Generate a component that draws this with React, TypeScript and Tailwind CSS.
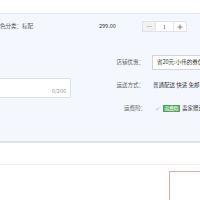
import React from "react";

export default function App() {
  const font = { fontFamily: '"Noto Sans CJK SC", "Noto Sans", sans-serif' };
  return (
    <div className="w-[200px] h-[200px] overflow-hidden bg-white" style={font}>
      <div className="h-[14px] bg-white border-b border-[#e6eaf1]" />
      <div className="h-[127px] bg-[#f4f7fd] overflow-hidden">
        {/* row 1 */}
        <div className="flex items-start h-[41px] pt-[7px] text-[5.5px] leading-[11px] text-[#333] whitespace-nowrap">
          <div className="w-[104.5px] shrink-0 -ml-[5.5px] text-[#555]">颜色分类：标配</div>
          <div className="w-[43px] shrink-0 text-[#333]">299.00</div>
          <div className="flex h-[11px] shrink-0">
            <div className="w-[14px] h-[11px] bg-[#f2f2f2] border border-[#e3e3e3] flex items-center justify-center">
              <div className="w-[5px] h-[0.6px] bg-[#c8c8c8]" />
            </div>
            <div className="w-[17px] h-[11px] bg-white border-y border-[#e3e3e3] flex items-center justify-center text-[5px] text-[#444]">1</div>
            <div className="w-[14px] h-[11px] bg-white border border-[#e3e3e3] flex items-center justify-center">
              <svg width="6" height="6" viewBox="0 0 6 6">
                <path d="M3 0.5 V5.5 M0.5 3 H5.5" stroke="#666" strokeWidth="0.8" />
              </svg>
            </div>
          </div>
        </div>
        {/* second section */}
        <div className="flex">
          <div className="w-[112px] shrink-0">
            <div className="mt-[23px] -ml-[1px] w-[72px] h-[20px] bg-white border border-[#dcdfe6] rounded-[1px] flex items-end justify-end pr-[4px] pb-[2px]">
              <span className="text-[5.5px] leading-[7px] text-[#999]">0/200</span>
            </div>
          </div>
          <div className="flex flex-col gap-[8px] text-[5.5px] whitespace-nowrap">
            <div className="flex items-center h-[15px]">
              <div className="w-[38px] text-right text-[#666] pr-[6px]">店铺优惠：</div>
              <div className="ml-[2px] w-[60px] h-[15px] bg-white border border-[#d0d4dc] flex items-center pl-[4px] text-[#333] overflow-hidden">
                省20元:小伟的券优惠
              </div>
            </div>
            <div className="flex items-center h-[15px]">
              <div className="w-[38px] text-right text-[#666] pr-[6px]">运送方式：</div>
              <div className="ml-[3px] text-[#333]">普通配送 快递 免邮</div>
            </div>
            <div className="flex items-center h-[15px]">
              <div className="w-[38px] text-right text-[#666] pr-[4px]">运费险：</div>
              <div className="ml-[5px] flex items-center">
                <svg width="5" height="5" viewBox="0 0 10 10" className="mr-[3px]">
                  <path d="M1.5 5.5 L4 8 L8.5 2" fill="none" stroke="#bbb" strokeWidth="1.6" />
                </svg>
                <span className="h-[7px] w-[17px] bg-[#63b96f] border border-[#4aa257] text-white text-[4.5px] leading-[5px] flex items-center justify-center">运费险</span>
                <span className="ml-[2px] text-[#333]">卖家赠送</span>
              </div>
            </div>
          </div>
        </div>
      </div>
      <div className="h-[2px] bg-[#dbe2ee]" />
      <div className="h-[22px] border-b border-[#ececec]" />
      <div className="ml-[169px] mt-[6px] w-[40px] h-[40px] border border-[#e3a5a8]" />
    </div>
  );
}
